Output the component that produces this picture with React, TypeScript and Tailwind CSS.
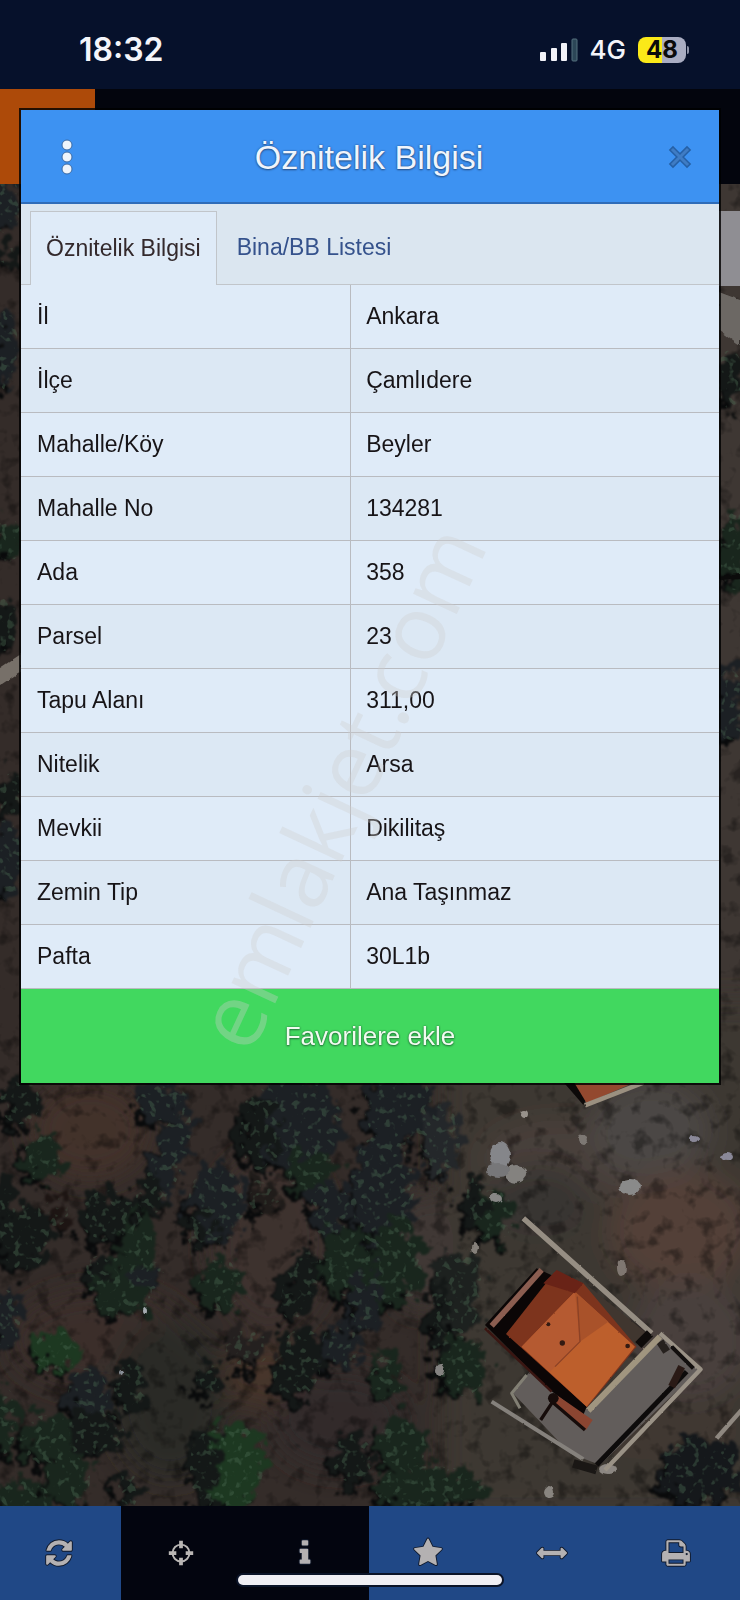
type Tree = [x: number, y: number, rx: number, ry: number, fill: string, tilt?: number];

const rows = [
  ["İl", "Ankara"],
  ["İlçe", "Çamlıdere"],
  ["Mahalle/Köy", "Beyler"],
  ["Mahalle No", "134281"],
  ["Ada", "358"],
  ["Parsel", "23"],
  ["Tapu Alanı", "311,00"],
  ["Nitelik", "Arsa"],
  ["Mevkii", "Dikilitaş"],
  ["Zemin Tip", "Ana Taşınmaz"],
  ["Pafta", "30L1b"],
];

const dark = "#141817";
const slate = "#1c2024";
const green = "#19261d";
const bright = "#1d3821";

const trees: Tree[] = [
  [20, 1102, 20, 22, dark],
  [42, 1158, 18, 24, green],
  [56, 1212, 12, 14, "#1d1513"],
  [108, 1216, 28, 26, dark],
  [136, 1238, 16, 26, green],
  [24, 1236, 26, 34, dark],
  [2, 1200, 12, 20, dark],
  [120, 1288, 32, 30, green],
  [98, 1270, 12, 14, dark],
  [150, 1275, 16, 14, slate],
  [6, 1320, 14, 30, slate],
  [56, 1352, 22, 22, bright],
  [130, 1386, 16, 26, dark],
  [88, 1396, 20, 28, slate],
  [52, 1440, 32, 26, green],
  [96, 1432, 28, 22, dark],
  [68, 1480, 22, 26, green],
  [20, 1500, 30, 20, green],
  [4, 1420, 12, 34, green],
  [128, 1490, 10, 20, dark],
  [162, 1100, 26, 20, slate],
  [168, 1160, 16, 52, slate, 20],
  [150, 1195, 14, 20, dark],
  [216, 1205, 28, 40, slate],
  [200, 1230, 14, 20, dark],
  [220, 1285, 22, 26, green],
  [264, 1196, 16, 18, "#201c1a"],
  [292, 1122, 50, 46, slate],
  [258, 1130, 18, 40, dark],
  [312, 1172, 24, 24, green],
  [330, 1210, 20, 28, slate],
  [300, 1285, 16, 36, dark, 18],
  [345, 1262, 26, 34, green],
  [364, 1300, 16, 34, slate],
  [298, 1364, 24, 36, dark, 16],
  [340, 1346, 18, 24, slate],
  [248, 1348, 22, 18, "#24201f"],
  [208, 1380, 12, 16, dark],
  [232, 1466, 34, 44, bright],
  [204, 1470, 14, 40, dark],
  [352, 1458, 20, 24, dark],
  [398, 1106, 34, 40, slate],
  [382, 1190, 32, 56, slate],
  [440, 1140, 20, 36, "#24272a"],
  [396, 1262, 26, 44, green],
  [492, 1216, 22, 26, green],
  [474, 1205, 8, 30, dark],
  [458, 1290, 24, 44, "#1d211f"],
  [440, 1320, 10, 40, dark],
  [462, 1366, 24, 30, green],
  [386, 1378, 16, 22, green],
  [402, 1446, 24, 26, green],
  [430, 1488, 56, 22, green],
  [700, 1470, 42, 34, "#15181b"],
  [5, 205, 16, 28, slate],
  [10, 256, 12, 8, dark],
  [6, 350, 12, 40, slate],
  [8, 540, 14, 22, green],
  [4, 625, 14, 26, dark],
  [12, 795, 14, 22, dark],
  [6, 860, 16, 40, slate],
  [730, 380, 14, 30, dark],
  [734, 550, 14, 40, green],
  [730, 705, 16, 36, slate],
];

const rocks: Tree[] = [
  [500, 1155, 10, 13, "#85868a"],
  [516, 1174, 11, 9, "#84827f"],
  [498, 1170, 12, 7, "#777779"],
  [630, 1187, 11, 8, "#8a8a8a"],
  [524, 1114, 4, 4, "#98928b"],
  [583, 1140, 5, 5, "#7d7873"],
  [496, 1198, 6, 5, "#878786"],
  [475, 1248, 3, 6, "#85807a"],
  [440, 1370, 5, 6, "#858381"],
  [727, 1157, 6, 4, "#8a8898"],
  [694, 1139, 5, 3, "#8a8898"],
  [145, 1311, 2, 3, "#a5aab0"],
  [121, 1373, 2, 3, "#8a9098"],
  [622, 1268, 4, 8, "#7f7771"],
  [549, 1492, 5, 6, "#898580"],
  [608, 1469, 9, 5, "#8c8782"],
];

const patches: Tree[] = [
  [90, 1130, 60, 50, "#43302a"],
  [100, 1340, 90, 50, "#3a2e29"],
  [270, 1240, 60, 90, "#3e332e"],
  [170, 1400, 60, 80, "#2b2b28"],
  [265, 1375, 40, 34, "#46352c"],
  [340, 1420, 70, 50, "#302c2a"],
  [560, 1160, 80, 40, "#4a3f3a"],
  [650, 1130, 60, 50, "#4b4644"],
  [680, 1230, 70, 60, "#533f39"],
  [690, 1340, 60, 60, "#48413c"],
  [420, 1250, 34, 60, "#403835"],
  [540, 1200, 50, 36, "#373432"],
  [660, 1430, 80, 30, "#403730"],
];

function Blobs({ items }: { items: Tree[] }) {
  return (
    <>
      {items.map(([x, y, rx, ry, fill, tilt = 0], i) => (
        <ellipse key={i} cx={x} cy={y} rx={rx} ry={ry} fill={fill} transform={`rotate(${tilt} ${x} ${y})`} />
      ))}
    </>
  );
}

function SatelliteMap() {
  return (
    <svg
      className="absolute inset-0 h-full w-full"
      viewBox="0 184 740 1322"
      preserveAspectRatio="xMidYMax slice"
      aria-hidden="true"
    >
      <defs>
        <filter id="soft" x="-20%" y="-20%" width="140%" height="140%">
          <feGaussianBlur stdDeviation="14" />
        </filter>
        <filter id="leaves" x="0" y="0" width="100%" height="100%" colorInterpolationFilters="sRGB">
          <feTurbulence type="fractalNoise" baseFrequency="0.07" numOctaves="4" seed="4" result="n" />
          <feDisplacementMap in="SourceGraphic" in2="n" scale="46" xChannelSelector="R" yChannelSelector="G" />
          <feGaussianBlur stdDeviation="1" />
        </filter>
        <filter id="rough" x="-5%" y="-5%" width="110%" height="110%" colorInterpolationFilters="sRGB">
          <feTurbulence type="fractalNoise" baseFrequency="0.12" numOctaves="2" seed="9" result="n" />
          <feDisplacementMap in="SourceGraphic" in2="n" scale="5" xChannelSelector="R" yChannelSelector="G" />
          <feGaussianBlur stdDeviation="0.6" />
        </filter>
        <filter id="grain" x="0" y="0" width="100%" height="100%" colorInterpolationFilters="sRGB">
          <feTurbulence type="fractalNoise" baseFrequency="0.06" numOctaves="3" seed="12" />
          <feColorMatrix values="0 0 0 0 0  0 0 0 0 0  0 0 0 0 0  4 0 0 0 -2.1" />
        </filter>
        {/* light specks, kept to the tree crowns by the mask of the source shape */}
        <filter id="glints" x="0" y="0" width="100%" height="100%" colorInterpolationFilters="sRGB">
          <feTurbulence type="fractalNoise" baseFrequency="0.14" numOctaves="2" seed="31" />
          <feColorMatrix values="0 0 0 0 0.3  0 0 0 0 0.42  0 0 0 0 0.33  0 7 0 0 -4" result="specks" />
          <feComposite in="specks" in2="SourceGraphic" operator="in" />
          <feGaussianBlur stdDeviation="0.6" />
        </filter>
      </defs>

      <rect y="184" width="740" height="1322" fill="#342c29" />
      <rect x="470" y="184" width="270" height="1322" fill="#3e3733" />
      <g filter="url(#soft)">
        <rect x="440" y="1000" width="340" height="520" fill="#3e3733" />
        <Blobs items={patches} />
      </g>
      <rect y="184" width="740" height="1322" filter="url(#grain)" opacity="0.35" />

      <g filter="url(#leaves)">
        <rect y="184" width="740" height="1322" fill="none" />
        <g transform="translate(-4 5)">
          {trees.map(([x, y, rx, ry, , tilt = 0], i) => (
            <ellipse key={i} cx={x} cy={y} rx={rx} ry={ry} fill="#090a0b" transform={`rotate(${tilt} ${x} ${y})`} />
          ))}
        </g>
        <Blobs items={trees} />
      </g>
      <g filter="url(#glints)" opacity="0.4">
        <Blobs items={trees} />
      </g>

      <g filter="url(#rough)">
        <Blobs items={rocks} />
        <path d="M0 668L21 654V672L0 686Z" fill="#777069" />
        <path d="M719 292L740 300V345L719 330Z" fill="#6c6864" />
        <path d="M719 578L740 576" stroke="#0b0b0b" strokeWidth="4" />
      </g>

      <g transform="translate(370 1070) scale(.3333)" strokeLinejoin="round" filter="url(#rough)">
        <path d="M575 30L640 105L670 40Z" fill="#0c0908" />
        <path d="M608 30H810L650 100Z" fill="#93492f" />
        <path d="M645 106L820 38" stroke="#9b9080" strokeWidth="14" fill="none" />

        <path d="M865 795L985 900L690 1185L600 1150L425 965L480 905L650 1015Z" fill="#625d5b" />
        <path d="M365 995L640 1168" stroke="#85817c" strokeWidth="12" fill="none" />
        <path d="M450 1015L425 970L470 915" stroke="#827f74" strokeWidth="9" fill="none" />
        <path d="M460 445L600 570L845 790" stroke="#968e83" strokeWidth="16" fill="none" />
        <path d="M870 790L992 898L705 1200" stroke="#9a9286" strokeWidth="13" fill="none" />
        <path d="M905 830L970 895" stroke="#120f0e" strokeWidth="12" fill="none" />
        <path d="M950 905L680 1185" stroke="#0d0b0b" strokeWidth="15" fill="none" />
        <path d="M935 890L905 950" stroke="#2a1a16" strokeWidth="22" fill="none" />
        <path d="M870 815L890 845" stroke="#26211e" strokeWidth="24" fill="none" />
        <path d="M610 1180L680 1200" stroke="#1a1715" strokeWidth="26" fill="none" />

        <path d="M620 620L830 790L800 825L600 665Z" fill="#40362f" />
        <path d="M345 765L500 595L555 620L410 790L650 1010L640 1035L540 960Z" fill="#0b0606" />
        <path d="M365 768L515 600" stroke="#8b5d50" strokeWidth="17" fill="none" />
        <path d="M345 775L545 965" stroke="#3a1612" strokeWidth="8" fill="none" />
        <path d="M408 792L555 605L640 640L800 830L652 1012Z" fill="#7d341d" />
        <path d="M455 830L615 665L795 830L650 1010Z" fill="#bd5f2c" />
        <path d="M615 665L630 815L540 905L455 830Z" fill="#b55a31" />
        <path d="M630 815L715 755L615 665Z" fill="#a9522a" />
        <path d="M560 600L640 640L615 670L520 640Z" fill="#692317" />
        <path d="M622 680L630 815L555 890" stroke="#8c4226" strokeWidth="4" fill="none" />
        <path d="M655 1022L870 800" stroke="#a0957f" strokeWidth="18" fill="none" />
        <path d="M840 790L805 825" stroke="#0e0b0a" strokeWidth="26" fill="none" />
        <path d="M560 975L668 1050L648 1080L540 995Z" fill="#8b4531" />
        <path d="M540 990L645 1080M545 1000L512 1050" fill="none" stroke="#160c0a" strokeWidth="10" />
        <circle cx="550" cy="985" r="16" fill="#160c0a" />
        <circle cx="535" cy="763" r="6" fill="#331a12" />
        <circle cx="577" cy="819" r="8" fill="#331a12" />
        <circle cx="773" cy="828" r="7" fill="#331a12" />
        <path d="M1040 1105L1115 1020" stroke="#8f8880" strokeWidth="13" fill="none" />
      </g>
    </svg>
  );
}

function StatusBar() {
  return (
    <div className="flex h-[89px] items-center justify-between bg-[#06112b] pt-[10px] pr-[51px] pl-[79px] font-['Inter',sans-serif] text-[#f4f5fa]">
      <span className="text-[32px] font-semibold">18:32</span>
      <div className="flex items-center">
        <svg className="h-6 w-[38px]" viewBox="0 0 38 24" aria-hidden="true">
          <rect x="0" y="14" width="6" height="9" rx="1" fill="#f1f2f8" />
          <rect x="11" y="10" width="6" height="13" rx="1" fill="#f1f2f8" />
          <rect x="21" y="5" width="6" height="18" rx="1" fill="#f1f2f8" />
          <rect x="32" y="1" width="5" height="22" rx="1" fill="#2c4657" stroke="#54707e" />
        </svg>
        <span className="ml-3 text-[26px] font-medium">4G</span>
        <div className="ml-3 flex h-[26px] w-12 items-center justify-center rounded-lg bg-linear-to-r from-[#fbe918] from-50% to-[#a9adc2] to-50% text-[24px] font-bold text-[#0b0b0b]">
          48
        </div>
        <span className="ml-px h-2 w-[2px] rounded-r bg-[#8d93a8]" />
      </div>
    </div>
  );
}

const iconPaths = {
  refresh:
    "M1639 1056q0 5-1 7-64 268-268 434.5t-478 166.5q-146 0-282.5-55t-243.5-157l-129 129q-19 19-45 19t-45-19-19-45v-448q0-26 19-45t45-19h448q26 0 45 19t19 45-19 45l-137 137q71 66 161 102t187 36q134 0 250-65t186-179q11-17 53-117 8-23 30-23h192q13 0 22.5 9.5t9.5 22.5zm25-800v448q0 26-19 45t-45 19h-448q-26 0-45-19t-19-45 19-45l138-138q-148-137-349-137-134 0-250 65t-186 179q-11 17-53 117-8 23-30 23h-199q-13 0-22.5-9.5t-9.5-22.5v-7q65-268 270-434.5t480-166.5q146 0 284 55.5t245 156.5l130-129q19-19 45-19t45 19 19 45z",
  info: "M1216 1344v128q0 26-19 45t-45 19h-512q-26 0-45-19t-19-45v-128q0-26 19-45t45-19h64v-384h-64q-26 0-45-19t-19-45v-128q0-26 19-45t45-19h384q26 0 45 19t19 45v576h64q26 0 45 19t19 45zm-128-1152v192q0 26-19 45t-45 19h-256q-26 0-45-19t-19-45v-192q0-26 19-45t45-19h256q26 0 45 19t19 45z",
  star: "M1728 647q0 22-26 48l-363 354 86 500q1 7 1 20 0 21-10.5 35.5t-30.5 14.5q-19 0-40-12l-449-236-449 236q-22 12-40 12-21 0-31.5-14.5t-10.5-35.5q0-6 2-20l86-500-364-354q-25-27-25-48 0-37 56-46l502-73 225-455q19-41 49-41t49 41l225 455 502 73q56 9 56 46z",
  measure:
    "M1792 896q0 26-19 45l-256 256q-19 19-45 19t-45-19-19-45v-128h-1024v128q0 26-19 45t-45 19-45-19l-256-256q-19-19-19-45t19-45l256-256q19-19 45-19t45 19 19 45v128h1024v-128q0-26 19-45t45-19 45 19l256 256q19 19 19 45z",
  print:
    "M448 1536h896v-256h-896v256zm0-640h896v-384h-160q-40 0-68-28t-28-68v-160h-640v640zm1152 64q0-26-19-45t-45-19-45 19-19 45 19 45 45 19 45-19 19-45zm128 0v416q0 13-9.5 22.5t-22.5 9.5h-224v160q0 40-28 68t-68 28h-960q-40 0-68-28t-28-68v-160h-224q-13 0-22.5-9.5t-9.5-22.5v-416q0-79 56.5-135.5t135.5-56.5h64v-544q0-40 28-68t68-28h672q40 0 88 20t76 48l152 152q28 28 48 76t20 88v256h64q79 0 135.5 56.5t56.5 135.5z",
};

function Glyph({ name }: { name: keyof typeof iconPaths }) {
  return (
    <svg
      className="h-[30px] w-[30px] overflow-visible fill-[#b4b1b2] stroke-[#111a2c] stroke-[110px]"
      viewBox="0 0 1792 1792"
      paintOrder="stroke"
      aria-hidden="true"
    >
      <path d={iconPaths[name]} />
    </svg>
  );
}

function Crosshair() {
  return (
    <svg className="h-[30px] w-[30px]" viewBox="0 0 32 32" fill="none" stroke="#b9b6b4" aria-hidden="true">
      <circle cx="16" cy="16" r="9" strokeWidth="2" />
      <path d="M16 3v8M16 21v8M3 16h8M21 16h8" strokeWidth="4" />
    </svg>
  );
}

function Toolbar() {
  const blue = "flex items-center justify-center bg-[#204886] pr-1";
  const black = "flex items-center justify-center bg-[#03050f] pr-1";
  return (
    <nav className="relative grid h-[94px] grid-cols-[121px_repeat(5,1fr)]">
      <button className={blue} aria-label="Yenile">
        <Glyph name="refresh" />
      </button>
      <button className={black} aria-label="Konum">
        <Crosshair />
      </button>
      <button className={black} aria-label="Bilgi">
        <Glyph name="info" />
      </button>
      <button className={blue} aria-label="Favoriler">
        <Glyph name="star" />
      </button>
      <button className={blue} aria-label="Ölçüm">
        <Glyph name="measure" />
      </button>
      <button className={blue} aria-label="Yazdır">
        <Glyph name="print" />
      </button>
      <span className="absolute bottom-[15px] left-1/2 h-[10px] w-[264px] -translate-x-1/2 rounded-full bg-[#f0eff4] ring-2 ring-[#0b1428]" />
    </nav>
  );
}

function ParcelDialog() {
  return (
    <section
      role="dialog"
      aria-labelledby="dialog-title"
      className="relative mx-[21px] -mt-[74px] overflow-hidden bg-[#dfebf8] ring-2 ring-black/80"
    >
      <header className="grid h-[94px] grid-cols-[92px_1fr_78px] items-center border-b-2 border-[#2f6cb8] bg-[#3d92f2] pt-[2px]">
        <button className="flex justify-center" aria-label="Menü">
          <svg className="h-9 w-4" viewBox="0 0 16 36" fill="#eef4fb" stroke="#3a6aa5" aria-hidden="true">
            <circle cx="8" cy="6" r="5" />
            <circle cx="8" cy="18" r="5" />
            <circle cx="8" cy="30" r="5" />
          </svg>
        </button>
        <h1
          id="dialog-title"
          className="pr-4 text-center text-[34px] text-[#f0f5fc] [text-shadow:0_0_2px_#26518a,0_1px_2px_#26518a]"
        >
          Öznitelik Bilgisi
        </h1>
        <button className="flex justify-center" aria-label="Kapat">
          <svg className="h-6 w-6" viewBox="0 0 24 24" fill="none" strokeLinecap="square" aria-hidden="true">
            <path d="M5 5l14 14M19 5L5 19" stroke="#2560a6" strokeWidth="6" />
            <path d="M5 5l14 14M19 5L5 19" stroke="#3f7cc4" strokeWidth="3" />
          </svg>
        </button>
      </header>

      <div role="tablist" className="flex h-[81px] border-b border-[#c1c5ca] bg-[#dbe6f0] pt-[7px] pl-[9px] text-[23px]">
        <button
          role="tab"
          aria-selected="true"
          className="-mb-px border border-b-0 border-[#c1c5ca] bg-[#dfebf8] px-[15px] text-[#33292c]"
        >
          Öznitelik Bilgisi
        </button>
        <button role="tab" aria-selected="false" className="px-5 text-[#35528c]">
          Bina/BB Listesi
        </button>
      </div>

      <table className="w-full table-fixed border-separate border-spacing-0 text-[23px] text-[#171417]">
        <tbody>
          {rows.map(([label, value]) => (
            <tr key={label} className="h-16 even:bg-[#dce8f4]">
              <th scope="row" className="w-[47.3%] border-r border-b border-[#b9bbc0] px-4 text-left font-normal">
                {label}
              </th>
              <td className="border-b border-[#b9bbc0] px-[15px]">{value}</td>
            </tr>
          ))}
        </tbody>
      </table>

      <button className="h-[94px] w-full bg-[#41d85f] text-[26px] text-[#f1fbf0] [text-shadow:0_0_2px_#24743a,0_1px_2px_#24743a]">
        Favorilere ekle
      </button>

      <span className="pointer-events-none absolute top-[676px] left-[317px] -translate-x-1/2 -translate-y-1/2 -rotate-[65deg] font-['Open_Sans',sans-serif] text-[90px] leading-none whitespace-nowrap text-[#cfcfcf]/35">
        emlakjet.com
      </span>
    </section>
  );
}

export default function App() {
  return (
    <div className="flex min-h-screen flex-col bg-[#06112b] font-['Liberation_Sans',Arial,sans-serif]">
      <StatusBar />
      <div className="flex h-[95px] bg-[#03050d]">
        <div className="w-[95px] bg-[#ad4a09]" />
      </div>
      <main className="relative flex-1 bg-[#352d2a]">
        <SatelliteMap />
        <div className="absolute top-[27px] right-0 h-[75px] w-[22px] bg-[#8f8e93]" />
        <ParcelDialog />
      </main>
      <Toolbar />
    </div>
  );
}
